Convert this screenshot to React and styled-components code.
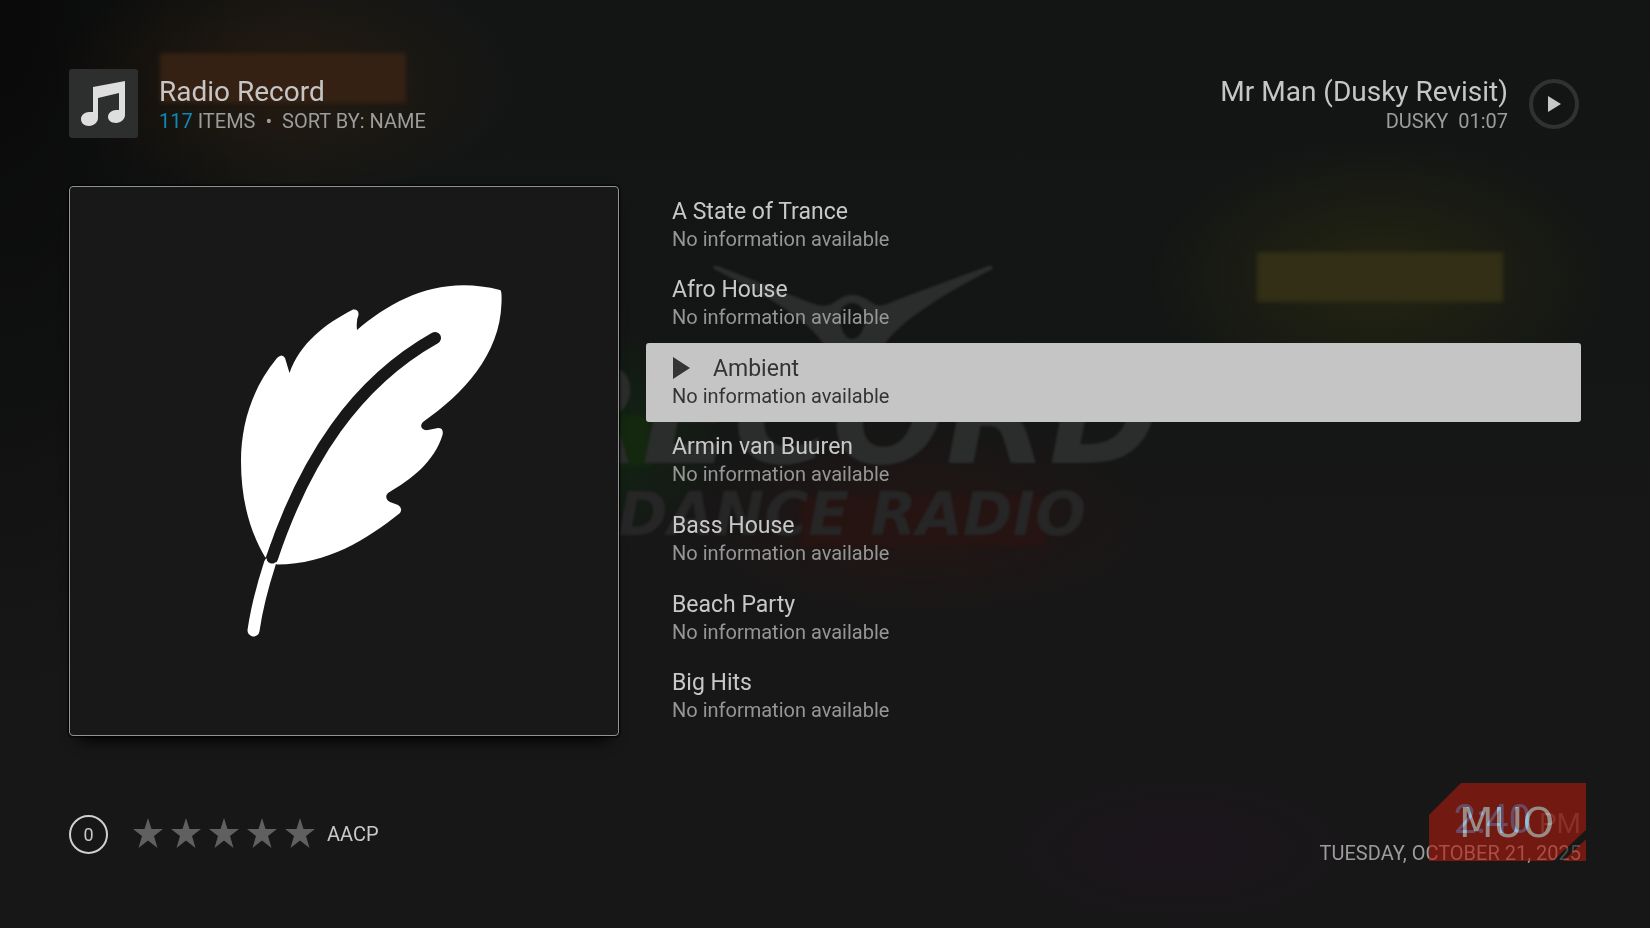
import React from "react";
import styled, { createGlobalStyle } from "styled-components";

const Global = createGlobalStyle`
  *, *::before, *::after { box-sizing: border-box; }
  body { margin: 0; background: #171717; color: #c8c8c8; font-family: Roboto, "Liberation Sans", sans-serif; font-weight: 400; }
  h1, h2, p, ul { margin: 0; padding: 0; font-weight: inherit; }
  button { font: inherit; color: inherit; border: 0; background: none; padding: 0; cursor: pointer; }
`;

const Screen = styled.main`
  position: relative;
  min-height: 100vh;
  overflow: hidden;
  display: flex;
  flex-direction: column;
  padding: 69px 69px 0;
`;

const Backdrop = styled.svg`
  position: absolute;
  inset: 0;
  width: 100%;
  height: 100%;
  z-index: -1;
`;

const Header = styled.header`
  display: flex;
  justify-content: space-between;
  align-items: center;
`;

const Cluster = styled.div`
  display: flex;
  align-items: center;
  gap: 21px;
  padding-right: ${(p) => (p.$inset ? "2px" : "0")};
`;

const CategoryTile = styled.div`
  width: 69px;
  height: 69px;
  border-radius: 3px;
  background: #2d2f2f;
`;

const Heading = styled.div`
  padding-top: 4px;
  text-align: ${(p) => (p.$align || "left")};
`;

const Title = styled.h1`
  font-size: 28px;
  line-height: 32px;
  color: #c6c6c6;
  white-space: pre;
`;

const Meta = styled.p`
  font-size: 20px;
  line-height: 27px;
  color: #9c9c9c;
  white-space: pre;
`;

const Count = styled.span`
  color: #0e89b8;
`;

const PlayRing = styled.button`
  width: 50px;
  height: 50px;
`;

const Icon = styled.svg`
  display: block;
  width: 100%;
  height: 100%;
`;

const Content = styled.div`
  display: grid;
  grid-template-columns: minmax(0, 550px) minmax(0, 1fr);
  gap: 27px;
  margin-top: 48px;
`;

const Poster = styled.div`
  aspect-ratio: 1;
  border: 1px solid #929292;
  border-radius: 4px;
  background: #181818;
  box-shadow: 0 0 2px 1px #000, 0 14px 14px -10px #000;
`;

const List = styled.ul`
  list-style: none;
  display: grid;
  grid-template-rows: repeat(7, 1fr);
`;

const Station = styled.button`
  display: block;
  width: 100%;
  height: 100%;
  padding: 0 26px 2px;
  border-radius: 3px;
  text-align: left;
  color: ${(p) => (p.$active ? "#343434" : "#c8c8c8")};
  background: ${(p) => (p.$active ? "#c5c5c5" : "transparent")};
`;

const StationName = styled.span`
  display: flex;
  align-items: center;
  gap: 23px;
  font-size: 23px;
  line-height: 29px;
`;

const PlayMark = styled.svg`
  width: 18px;
  height: 22px;
`;

const StationInfo = styled.span`
  display: block;
  font-size: 20px;
  line-height: 26px;
  color: ${(p) => (p.$active ? "#343434" : "#969696")};
`;

const Footer = styled.footer`
  display: flex;
  justify-content: space-between;
  margin-top: 63px;
`;

const Details = styled.div`
  display: flex;
  align-items: center;
  height: 70px;
`;

const Badge = styled.span`
  display: grid;
  place-items: center;
  width: 39px;
  height: 39px;
  margin-right: 24px;
  border: 2px solid #cfcfcf;
  border-radius: 50%;
  font-size: 18px;
`;

const Stars = styled.div`
  display: flex;
  gap: 6px;
  margin-right: 11px;
`;

const Star = styled.svg`
  width: 32px;
  height: 32px;
`;

const Codec = styled.span`
  font-size: 20px;
`;

const Clock = styled.div`
  position: relative;
  text-align: right;
`;

const Time = styled.p`
  height: 41px;
  font-size: 40px;
  line-height: 41px;
  color: #0a90e0;
`;

const Meridiem = styled.span`
  margin-left: 8px;
  font-size: 28px;
  line-height: 1;
  color: #505050;
`;

const Watermark = styled.svg`
  position: absolute;
  right: -5px;
  top: -16px;
  width: 157px;
  height: 78px;
`;

const Wordmark = styled.text`
  font: 40px "DejaVu Sans", sans-serif;
  fill: #267378;
  mix-blend-mode: plus-lighter;
`;

const BackdropWord = styled.text`
  font: italic 700 ${(p) => p.$size}px "DejaVu Sans", sans-serif;
  text-anchor: end;
`;

const stations = ["A State of Trance", "Afro House", "Ambient", "Armin van Buuren", "Bass House", "Beach Party", "Big Hits"];
const current = "Ambient";

const glows = [
  { id: "amber", color: "#32200c", opacity: 0.45, cx: 283, cy: 80, rx: 230, ry: 120 },
  { id: "olive", color: "#262710", opacity: 0.7, cx: 1380, cy: 277, rx: 230, ry: 135 },
  { id: "green", color: "#0f2c10", opacity: 0.6, cx: 590, cy: 440, rx: 140, ry: 110 },
  { id: "red", color: "#2c1412", opacity: 0.45, cx: 923, cy: 521, rx: 250, ry: 100 },
  { id: "plum", color: "#1e151e", opacity: 0.6, cx: 1180, cy: 850, rx: 210, ry: 90 },
];

const Artwork = () => (
  <Backdrop viewBox="0 0 1650 928" preserveAspectRatio="xMidYMid slice" aria-hidden="true">
    <defs>
      <linearGradient id="base" x1="0" y1="0" x2="0" y2="1">
        <stop offset="0" stopColor="#131515" />
        <stop offset="0.4" stopColor="#141615" />
        <stop offset="0.6" stopColor="#171717" />
        <stop offset="1" stopColor="#171717" />
      </linearGradient>
      <radialGradient id="corner" cx="0" cy="0" r="1">
        <stop offset="0" stopColor="#090909" />
        <stop offset="1" stopColor="#090909" stopOpacity="0" />
      </radialGradient>
      {glows.map((g) => (
        <radialGradient key={g.id} id={g.id}>
          <stop offset="0.2" stopColor={g.color} stopOpacity={g.opacity} />
          <stop offset="0.6" stopColor={g.color} stopOpacity={g.opacity * 0.5} />
          <stop offset="1" stopColor={g.color} stopOpacity="0" />
        </radialGradient>
      ))}
      <filter id="soft" x="-10%" y="-10%" width="120%" height="120%" colorInterpolationFilters="sRGB"><feGaussianBlur stdDeviation="2" /></filter>
      <filter id="edge" colorInterpolationFilters="sRGB"><feGaussianBlur stdDeviation="1" /></filter>
    </defs>
    <rect width="1650" height="928" fill="url(#base)" />
    <rect width="300" height="700" fill="url(#corner)" />
    {glows.map((g) => (
      <ellipse key={g.id} cx={g.cx} cy={g.cy} rx={g.rx} ry={g.ry} fill={`url(#${g.id})`} />
    ))}
    <g filter="url(#soft)">
      <rect x="160" y="53" width="246" height="50" fill="#342113" />
      <rect x="1257" y="252" width="246" height="50" fill="#322f16" />
      <rect x="560" y="416" width="90" height="50" fill="#14280f" />
      <rect x="800" y="496" width="246" height="50" fill="#261412" />
    </g>
    <g fill="#2b2c2c" filter="url(#edge)">
      <path fillRule="evenodd" d="M714 269C712 266 714 265 718 266L806 301C816 305 823 307 829 305C836 303 840 295 852 295C865 295 870 303 876 305C883 307 891 302 899 299L988 266C993 265 994 267 991 270C945 293 900 321 884 345H824C807 317 758 292 714 269ZM852 303C844 303 840 310 840 318C840 330 846 339 852 339C859 339 865 330 865 318C865 310 860 303 852 303Z" />
      <BackdropWord x="1160" y="463" $size={134}>RECORD</BackdropWord>
      <BackdropWord x="1086" y="535" $size={60} fill="#262626">DANCE RADIO</BackdropWord>
    </g>
  </Backdrop>
);

export default function App() {
  return (
    <>
      <Global />
      <Screen>
        <Artwork />
        <Header>
          <Cluster>
            <CategoryTile>
              <Icon viewBox="0 0 69 69" aria-hidden="true">
                <path fill="#dedede" d="M24 18 56 12V46C56 50 52 54 47 54 42 54 39 51 39 48 39 44 43 41 47 41H50V24L29 29V49C29 53 25 57 20 57 15 57 12 54 12 50 12 46 16 43 20 43H24Z" />
              </Icon>
            </CategoryTile>
            <Heading>
              <Title>Radio Record</Title>
              <Meta><Count>117</Count> ITEMS  •  SORT BY: NAME</Meta>
            </Heading>
          </Cluster>
          <Cluster $inset>
            <Heading $align="right">
              <Title as="h2">Mr Man (Dusky Revisit)</Title>
              <Meta>DUSKY  01:07</Meta>
            </Heading>
            <PlayRing aria-label="Play">
              <Icon viewBox="0 0 50 50" aria-hidden="true">
                <circle cx="25" cy="25" r="23" fill="none" stroke="#303131" strokeWidth="4" />
                <path d="M19 17v16l13-8z" fill="#c8c8c8" />
              </Icon>
            </PlayRing>
          </Cluster>
        </Header>

        <Content>
          <Poster>
            <Icon viewBox="70 187 548 548" role="img" aria-label="Feather">
              <path fill="#fff" d="M265 557C248 528 241 496 241 461C241 425 252 388 277 358Q282 353 285 358L289.500 373C300 343 325 324 353 309.500Q359 309 358.500 315Q356 320 357 330C395 298 441 275 500 290Q502 290 501.500 303C500 355 463 394 423 422C419 426 422 431 428 430L438 428Q444 428 442.500 435C434 462 412 479 388 493C385 496 386 500 390 502L398 505Q403 508 400 513C366 540 328 564 277 564.500Z" />
              <path fill="none" stroke="#181818" strokeWidth="12" strokeLinecap="round" d="M435 338C355 383 305 460 272 558" />
              <path fill="none" stroke="#fff" strokeWidth="12" strokeLinecap="round" d="M253.500 630.500Q258 600 270 563" />
              <path fill="none" stroke="#181818" strokeWidth="11" strokeLinecap="round" d="M276 546 272 558" />
            </Icon>
          </Poster>
          <List>
            {stations.map((name) => {
              const active = name === current;
              return (
                <li key={name}>
                  <Station $active={active}>
                    <StationName>
                      {active && <PlayMark viewBox="0 0 18 22" aria-hidden="true"><path fill="#343434" d="M1 0v22l17-11z" /></PlayMark>}
                      {name}
                    </StationName>
                    <StationInfo $active={active}>No information available</StationInfo>
                  </Station>
                </li>
              );
            })}
          </List>
        </Content>

        <Footer>
          <Details>
            <Badge>0</Badge>
            <Stars role="img" aria-label="No rating">
              {[1, 2, 3, 4, 5].map((n) => (
                <Star key={n} viewBox="0 0 32 32"><path fill="#606060" d="M16 0 19.500 11H31L22 18 25.500 30 16 22.500 6.500 30 10 18 1 11H12.500Z" /></Star>
              ))}
            </Stars>
            <Codec>AACP</Codec>
          </Details>
          <Clock>
            <Time>2:40<Meridiem>PM</Meridiem></Time>
            <Meta>TUESDAY, OCTOBER 21, 2025</Meta>
            <Watermark viewBox="0 0 157 78" role="img" aria-label="MUO">
              <path fill="#af1a0d" fillOpacity="0.6" d="M32 0H157V47L124 78H0V32ZM157 56V78H134Z" />
              <path fill="#171717" fillOpacity="0.6" d="M157 47V56L134 78H124Z" />
              <Wordmark x="30" y="54">MUO</Wordmark>
            </Watermark>
          </Clock>
        </Footer>
      </Screen>
    </>
  );
}
